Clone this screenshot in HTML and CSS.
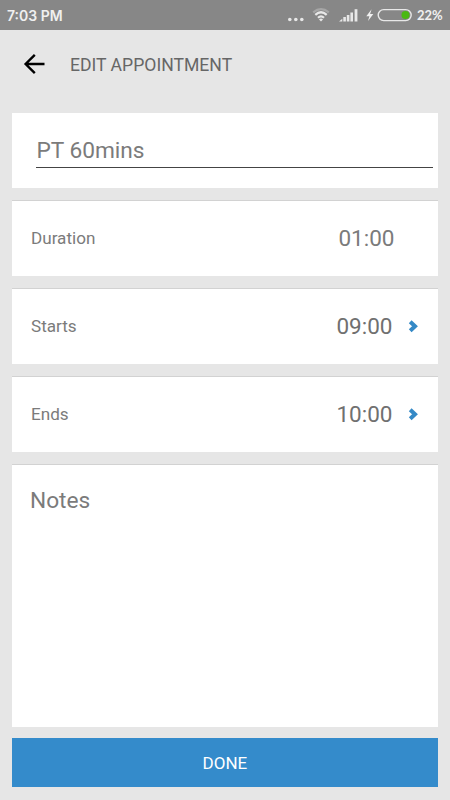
FILE: index.html
```
<!DOCTYPE html>
<html lang="en">
<head>
	<meta charset="UTF-8">
	<meta name="viewport" content="width=device-width, initial-scale=1">
	<title>Edit Appointment</title>
	<link rel="stylesheet" href="styles.css">
</head>
<body>
	<div class="statusbar">
		<span class="clock">7:03 PM</span>
		<svg class="status-icons" width="126" height="30" viewBox="0 0 126 30">
			<!-- more -->
			<g fill="#e8e8e8">
				<circle cx="4.8" cy="19.5" r="1.8"/>
				<circle cx="10.8" cy="19.5" r="1.8"/>
				<circle cx="16.8" cy="19.5" r="1.8"/>
			</g>
			<!-- wifi -->
			<g fill="none" stroke="#e8e8e8" stroke-width="2.2">
				<path d="M28.2 12.4Q36 6 43.8 12.4" stroke="#a6a6a6"/>
				<path d="M30.3 14.9Q36 9.6 41.7 14.9"/>
				<path d="M33 17.8Q36 15 39 17.8"/>
			</g>
			<path d="M34 19.4Q36 17.8 38 19.4L36 21.5Z" fill="#e8e8e8"/>
			<!-- signal -->
			<g fill="#e8e8e8">
				<path d="M54 21.5L57.3 18.7V21.5Z"/>
				<rect x="58.3" y="17" width="2.6" height="4.5"/>
				<rect x="61.8" y="15" width="2.6" height="6.5"/>
				<rect x="65.4" y="12.5" width="2.6" height="9"/>
				<rect x="69.6" y="9.2" width="2.8" height="12.3"/>
			</g>
			<!-- charging -->
			<path d="M86.6 9.2L81.3 16.2H84.4L83 20.9L88.3 14H85.1Z" fill="#f0f0f0"/>
			<rect x="93.2" y="9.6" width="33" height="11" rx="5.5" fill="none" stroke="#e8e8e8" stroke-width="1.4"/>
			<circle cx="120.5" cy="15.1" r="4" fill="#4bb814"/>
		</svg>
		<span class="percent">22%</span>
	</div>

	<div class="header">
		<svg class="back" width="22" height="22" viewBox="0 0 22 22" fill="none" stroke="#000" stroke-width="2.4">
			<path d="M21.5 11H3M11.8 1.8L2.6 11L11.8 20.2"/>
		</svg>
		<span class="title">EDIT APPOINTMENT</span>
	</div>

	<div class="content">
		<div class="card name-card">
			<div class="name">PT 60mins</div>
		</div>
		<div class="card row">
			<span class="label">Duration</span>
			<span class="time time-fixed">01:00</span>
		</div>
		<div class="card row">
			<span class="label">Starts</span>
			<span class="time">09:00</span>
			<svg class="chevron" width="10" height="14" viewBox="0 0 10 14"><path d="M1.2 1.8L6 6.3L1.2 10.8"/></svg>
		</div>
		<div class="card row">
			<span class="label">Ends</span>
			<span class="time">10:00</span>
			<svg class="chevron" width="10" height="14" viewBox="0 0 10 14"><path d="M1.2 1.8L6 6.3L1.2 10.8"/></svg>
		</div>
		<div class="card notes">Notes</div>
		<div class="done">DONE</div>
	</div>
</body>
</html>
```

FILE: styles.css
```
* {
	box-sizing: border-box;
}
body {
	margin: 0;
	height: 800px;
	background: #e6e6e6;
	font-family: Roboto, sans-serif;
	color: #7b7b7b;
	overflow: hidden;
}
.statusbar {
	display: flex;
	align-items: center;
	height: 30px;
	padding: 0 7px;
	background: #878787;
	color: #f0f0f0;
	font-family: Inter, sans-serif;
	font-size: 14px;
	font-weight: 600;
}
.clock {
	flex: 1;
}
.status-icons {
	overflow: visible;
}
.percent {
	width: 26px;
	margin-left: 6px;
	font-family: Lato, sans-serif;
	font-size: 13px;
	font-weight: 700;
}
.header {
	display: flex;
	align-items: center;
	height: 70px;
	padding: 0 0 2px 23px;
}
.title {
	margin-left: 25px;
	padding-top: 2px;
	font-size: 17.6px;
	color: #666;
}
.content {
	padding: 13px 12.5px 0 12.4px;
}
.card {
	height: 75px;
	margin-bottom: 13px;
	background: #fff;
	box-shadow: 0 -1px 0 #d2d2d2;
}
.name-card {
	padding: 19px 5px 0 24px;
	box-shadow: none;
}
.name {
	height: 36px;
	border-bottom: 1px solid #444;
	font-size: 22.7px;
	line-height: 37px;
}
.row {
	display: flex;
	align-items: center;
	padding: 0 19px 0 18.6px;
}
.label {
	flex: 1;
	padding-bottom: 2px;
	font-size: 17.1px;
}
.time {
	padding-bottom: 2px;
	font-size: 22.5px;
	color: #707070;
}
.time-fixed {
	margin-right: 24px;
	color: #7b7b7b;
}
.chevron {
	margin-left: 16px;
	fill: none;
	stroke: #3489c6;
	stroke-width: 4;
	overflow: visible;
}
.notes {
	height: 262px;
	margin-bottom: 11px;
	padding: 22px 17.6px;
	font-size: 22.7px;
	line-height: 28px;
}
.done {
	height: 49px;
	background: #348bcb;
	color: #fff;
	font-size: 17px;
	line-height: 51px;
	text-align: center;
}
```
